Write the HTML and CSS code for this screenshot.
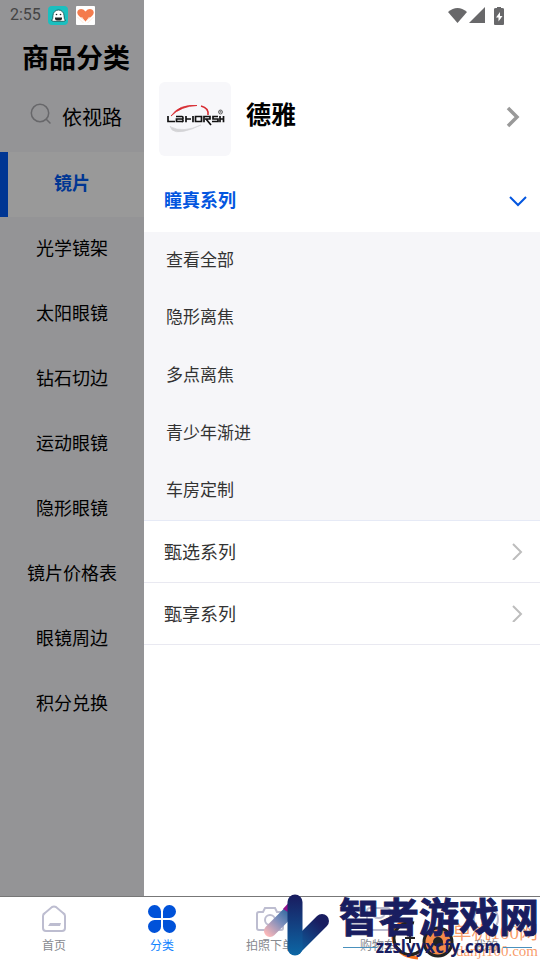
FILE: index.html
```html
<!DOCTYPE html>
<html lang="zh-CN">
<head>
<meta charset="utf-8">
<meta name="viewport" content="width=device-width, initial-scale=1">
<title>商品分类</title>
<link rel="stylesheet" href="styles.css">
</head>
<body>
<div class="app">
  <div class="content">
    <aside class="sidebar">
      <div class="status">
        <span class="time">2:55</span>
        <svg width="20" height="20" viewBox="0 0 20 20" aria-hidden="true"><rect x="0" y="1" width="20" height="19" rx="4" fill="#1bbfbf"/><path d="M3.500 15.500q1.500-1 1.500-5a5.500 5.500 0 0 1 11 0q0 4 1.500 5l-2 .8h-10z" fill="#fff" stroke="#174c4c" stroke-width=".8"/><path d="M7 12.500h7v1q0 2-2 2H9q-2 0-2-2z" fill="#222"/><circle cx="8.500" cy="9.500" r=".8" fill="#222"/><circle cx="12.500" cy="9.500" r=".8" fill="#222"/></svg>
        <svg class="heart" width="20" height="20" viewBox="0 0 20 20" aria-hidden="true"><rect y="1" width="19" height="19" rx="1" fill="#fff"/><path d="M9.500 16.500 3 11q-3.500-4 0-6.500 3.500-1.500 6.500 2 3-3.500 6.500-2 3.500 2.500 0 6.500z" fill="#f47b4c"/><path d="m1.500 12 6 6M17.500 12l-6 6M5.500 12l3 4M13.500 12l-3 4" fill="none" stroke="#ffe8da" stroke-width="1"/></svg>
      </div>
      <h1>商品分类</h1>
      <button class="search" type="button">
        <svg width="22" height="22" viewBox="0 0 22 22" fill="none" stroke="#67676a" stroke-width="1.500" stroke-linecap="round" aria-hidden="true"><circle cx="10" cy="10" r="8.700"/><path d="m16.500 16.500 3.500 3.500"/></svg>
        <span>依视路</span>
      </button>
      <nav class="cats">
        <a class="active" href="#">镜片</a>
        <a href="#">光学镜架</a>
        <a href="#">太阳眼镜</a>
        <a href="#">钻石切边</a>
        <a href="#">运动眼镜</a>
        <a href="#">隐形眼镜</a>
        <a href="#">镜片价格表</a>
        <a href="#">眼镜周边</a>
        <a href="#">积分兑换</a>
      </nav>
    </aside>
    <main class="drawer">
      <div class="status device">
        <svg width="60" height="20" viewBox="0 0 60 20" fill="#68686a" aria-hidden="true"><path d="M0 6q9.500-8 19 0L9.500 17z"/><path d="M37 1v16H21z"/><path d="M48 2h1V1h4v1h1q2 0 2 1v15q0 1-1 1h-8q-1 0-1-1V3q0-1 2-1z"/><path d="M52 6l-4 5.500h2.500v4l4-5.500H52z" fill="#fff"/></svg>
      </div>
      <a class="brand" href="#">
        <svg class="logo" width="72" height="74" viewBox="0 0 72 74" role="img" aria-label="LBHORSH">
          <rect width="72" height="74" rx="6" fill="#f7f7fa"/>
          <path d="M12 34Q20 22 38 23.500 22 24 12 34z" fill="#d72a30" stroke="#d72a30" stroke-width=".8"/><path d="M42 24q8 2 7 9" fill="none" stroke="#d72a30" stroke-width="1.500"/>
          <path d="M11 44q2 10 22 3l9-4Q24 51 12 45z" fill="#d4d4d6" stroke="#d4d4d6" stroke-width=".6"/>
          <g fill="none" stroke="#111" stroke-width="1.700"><path d="M9 34v5.500h7M17 34.500h6q1 0 1 1.500t-1 1q1 0 1 1.500t-1 1h-5.500V37h6M27 34v6.300M27 37h5M34 34v6.300M36.500 34.500h6v5h-6zM45 40.300v-5.800h6V37h-5M47 37l5 6M59 34.500h-5V37h5v2.500h-6M61 34v6.300M61 37h3M64.500 34v6.300"/></g>
          <circle cx="61.500" cy="30" r="2" fill="none" stroke="#333" stroke-width=".7"/><path d="M61 31v-2h1v2" fill="none" stroke="#333" stroke-width=".5"/>
        </svg>
        <h2>德雅</h2>
        <svg class="chev" width="14" height="22" viewBox="0 0 14 22" fill="none" stroke="#999" stroke-width="3.500" aria-hidden="true"><path d="m2 2 9 9-9 9"/></svg>
      </a>
      <button class="row open" type="button"><span>瞳真系列</span>
        <svg width="18" height="18" viewBox="0 0 18 18" fill="none" stroke="#0356df" stroke-width="2" aria-hidden="true"><path d="m1 7 8 8 8-8"/></svg>
      </button>
      <div class="sub">
        <a href="#">查看全部</a>
        <a href="#">隐形离焦</a>
        <a href="#">多点离焦</a>
        <a href="#">青少年渐进</a>
        <a href="#">车房定制</a>
      </div>
      <button class="row" type="button"><span>甄选系列</span>
        <svg width="18" height="18" viewBox="0 0 18 18" fill="none" stroke="#bdbdbd" stroke-width="2" aria-hidden="true"><path d="m4 2 8 8-8 8"/></svg>
      </button>
      <button class="row" type="button"><span>甄享系列</span>
        <svg width="18" height="18" viewBox="0 0 18 18" fill="none" stroke="#bdbdbd" stroke-width="2" aria-hidden="true"><path d="m4 2 8 8-8 8"/></svg>
      </button>
    </main>
  </div>
  <nav class="tabs">
    <a href="#"><svg width="28" height="28" viewBox="0 0 28 28" fill="none" stroke="#bdbdd0" stroke-width="2" aria-hidden="true"><path d="M3 11q0-2 2-3l7-6q2-1 4 0l7 6q2 1 2 3v12q0 3-3 3H6q-3 0-3-3z"/><path d="M10 18h11l-1 3H8z" fill="#bdbdd0" stroke="none"/></svg><span>首页</span></a>
    <a class="on" href="#"><svg width="28" height="28" viewBox="0 0 28 28" fill="#0052d9" aria-hidden="true"><path d="M13 13H7A6.500 6.500 0 1 1 13 7zM15 13V7a6.500 6.500 0 1 1 6 6zM13 15v6a6.500 6.500 0 1 1-6-6zM15 15h6a6.500 6.500 0 1 1-6 6z"/></svg><span>分类</span></a>
    <a href="#"><svg width="28" height="28" viewBox="0 0 28 28" fill="none" stroke="#bdbdd0" stroke-width="2" aria-hidden="true"><path d="M3 7h4l2-4h10l2 4h4q2 0 2 2v14q0 2-2 2H3q-2 0-2-2V9q0-2 2-2z"/><circle cx="14" cy="15" r="5"/></svg><span>拍照下单</span></a>
    <a href="#"><svg width="28" height="28" viewBox="0 0 28 28" fill="none" stroke="#bdbdd0" stroke-width="2" aria-hidden="true"><rect x="3" y="3" width="23" height="22" rx="3"/><path d="M8 8q1 5 6.500 5T21 8"/></svg><span>购物车</span></a>
    <a href="#"><svg width="28" height="28" viewBox="0 0 28 28" fill="none" stroke="#bdbdd0" stroke-width="2" aria-hidden="true"><circle cx="14" cy="14" r="12"/><path d="M9 8v5q5 6 10 0V8"/></svg><span>我的</span></a>
    <div class="mark" aria-hidden="true">
      <svg class="badge" width="66" height="42" viewBox="0 0 66 42" fill="none"><path d="M22 1Q4 3 3 20q2 18 25 20" stroke="#f5701d" stroke-width="3"/><path d="M24 5A16 16 0 1 0 30 33" stroke="#222" stroke-width="3"/><path d="M20 15v10M15 20h10" stroke="#222" stroke-width="2"/><circle cx="48" cy="24" r="14" fill="#f58a48" stroke="#222" stroke-width="3"/><circle cx="48" cy="24" r="5" fill="#222"/></svg>
      <div class="orange"><span>单机100网</span><small>danji100.com</small></div>
      <svg class="pill" width="70" height="66" viewBox="0 0 70 66" fill="none" stroke-linecap="round">
        <defs><linearGradient id="a" gradientUnits="userSpaceOnUse" x1="4" y1="42" x2="30" y2="14"><stop offset="0" stop-color="#ffb8b8"/><stop offset=".5" stop-color="#7b8dbb"/><stop offset="1" stop-color="#155b96"/></linearGradient><linearGradient id="b" gradientUnits="userSpaceOnUse" x1="33" y1="3" x2="33" y2="64"><stop offset="0" stop-color="#191d60"/><stop offset="1" stop-color="#0c69a7"/></linearGradient><linearGradient id="c" gradientUnits="userSpaceOnUse" x1="58" y1="30" x2="32" y2="60"><stop offset="0" stop-color="#191d60"/><stop offset="1" stop-color="#0c69a7"/></linearGradient></defs>
        <path d="M8 38 32 14" stroke="url(#a)" stroke-width="12"/><path d="m21 16 8-9v14z" fill="#93118c"/><path d="m33 55 27-27" stroke="url(#c)" stroke-width="14"/><path d="M33 9v46" stroke="url(#b)" stroke-width="15"/>
      </svg>
      <i class="line left"></i><i class="line right"></i>
      <strong class="big">智者游戏网</strong>
      <b class="url">zzslyyxcfy.com</b>
    </div>
  </nav>
</div>
</body>
</html>
```
FILE: styles.css
```css
* { box-sizing: border-box; }
body {
  margin: 0;
  font-family: "Noto Sans CJK SC", sans-serif;
  color: #333;
  background: #fff;
}
a { color: inherit; text-decoration: none; }
button {
  border: 0;
  padding: 0;
  background: none;
  font: inherit;
  color: inherit;
}
svg { display: block; flex: none; }
h1, h2 { margin: 0; color: #000; }
.app { display: flex; flex-direction: column; min-height: 100vh; }
.content { display: flex; flex: 1; }
.sidebar { width: 144px; flex: none; background: #949496; color: #000; }
.drawer { flex: 1; min-width: 0; background: #fff; }
.status {
  display: flex;
  align-items: center;
  gap: 7px;
  height: 30px;
  padding-left: 10px;
}
.time {
  width: 31px;
  font: 400 16px/20px Roboto, sans-serif;
  color: #444;
  white-space: nowrap;
}
.heart { margin-left: 1px; }
.device { justify-content: flex-end; padding: 2px 32px 0 0; }
h1 { padding-left: 22px; font-size: 27px; line-height: 54px; }
.search {
  display: flex;
  align-items: center;
  gap: 10px;
  height: 68px;
  padding: 0 0 8px 30px;
  font-size: 20px;
}
.search span { padding-top: 4px; }
.cats a {
  display: flex;
  align-items: center;
  justify-content: center;
  height: 65px;
  padding-bottom: 6px;
  font-size: 18px;
}
.cats .active {
  background: #999;
  border-left: 8px solid #003693;
  padding-right: 8px;
  color: #003693;
  font-weight: 700;
}
.brand {
  display: flex;
  align-items: center;
  gap: 15px;
  padding: 52px 20px 12px 15px;
}
h2 { flex: 1; padding-bottom: 12px; font-size: 25px; line-height: 36px; }
.chev { margin-bottom: 4px; }
.row {
  display: flex;
  align-items: center;
  justify-content: space-between;
  width: 100%;
  height: 62px;
  padding: 0 13px 2px 20px;
  border-bottom: 1px solid #e9e9f1;
  font-size: 18px;
}
.open { height: 64px; border: 0; color: #0356df; font-weight: 700; }
.sub {
  display: grid;
  grid-auto-rows: 1fr;
  height: 289px;
  padding-left: 22px;
  background: #f6f6f9;
  border-bottom: 1px solid #e6eaf6;
  font-size: 17px;
}
.sub a { display: flex; align-items: center; padding-bottom: 5px; }
.tabs {
  position: relative;
  display: flex;
  height: 64px;
  border-top: 1px solid #777;
  background: #fff;
}
.tabs a {
  display: flex;
  flex: 1;
  flex-direction: column;
  align-items: center;
  padding-top: 8px;
  font-size: 12px;
  line-height: 24px;
  color: #888a90;
}
.tabs .on { color: #1283ff; }
.mark { position: absolute; top: -4px; right: 0; width: 280px; height: 67px; pointer-events: none; }
.mark > * { position: absolute; }
.pill { left: 2px; top: 0; }
.badge { left: 130px; top: 25px; }
.big {
  right: 1px;
  top: 0;
  font-size: 40px;
  line-height: 44px;
  font-weight: 700;
  color: #191d60;
  -webkit-text-stroke: 1px #191d60;
  white-space: nowrap;
}
.url { right: 39px; top: 42px; font: 700 17px/24px "Open Sans", sans-serif; color: #191d60; }
.orange { right: 2px; top: 29px; color: rgba(245, 112, 38, .7); font: 19px/22px "Liberation Serif", "Noto Sans CJK SC", serif; text-align: right; }
.orange span, .orange small { display: block; white-space: nowrap; }
.orange small { font-size: 15px; line-height: 14px; }
.line { top: 54px; height: 1px; background: #4a91bd; }
.left { left: 83px; width: 34px; }
.right { right: 8px; width: 29px; }
```
